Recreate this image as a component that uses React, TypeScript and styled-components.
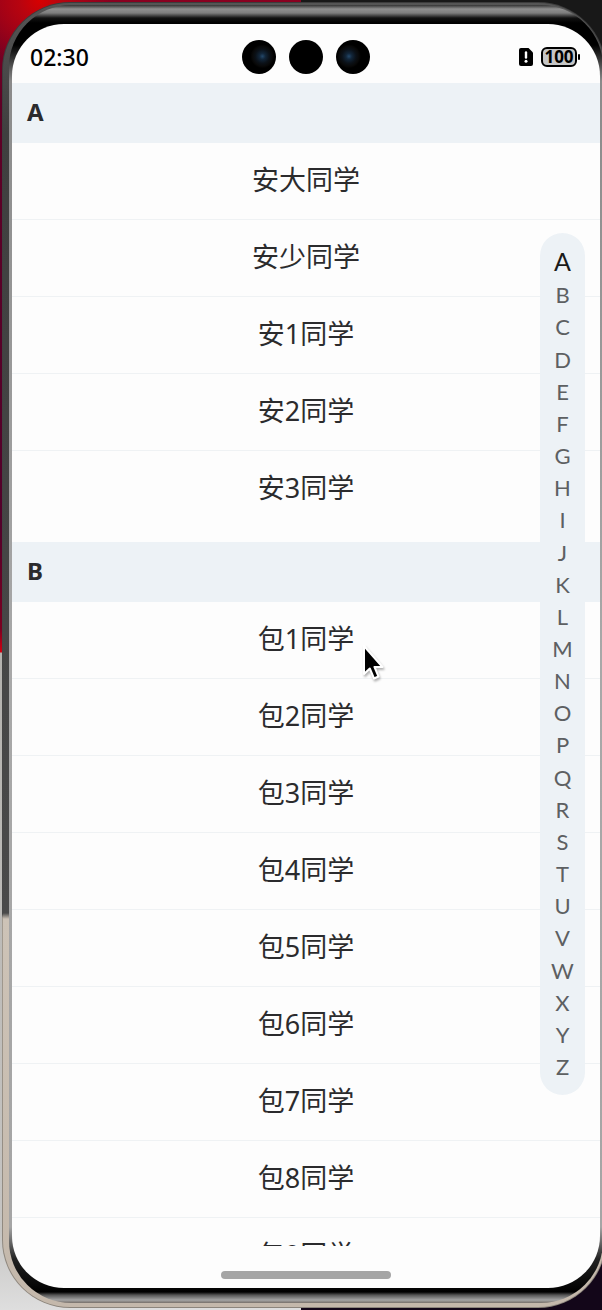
import React from "react";
import styled, { createGlobalStyle } from "styled-components";

const GlobalStyle = createGlobalStyle`
  *, *::before, *::after { box-sizing: border-box; }
  html, body { margin: 0; padding: 0; }
  body { font-family: "Noto Sans", "Noto Sans CJK SC", sans-serif; color: #2b2b2d; }
`;

const Wallpaper = styled.div`
  height: 100vh;
  padding: 2px 0 2px 2px;
  overflow: hidden;
  background:
    linear-gradient(#181818, #181818) right top / 50% 50% no-repeat,
    linear-gradient(#130619, #130619) right bottom / 50% 50% no-repeat,
    radial-gradient(circle at 40px 0, #d80000 0, #b8040f 20px, transparent 70px) left top / 100% 90px no-repeat,
    linear-gradient(to bottom, #8a0020 0, #5e0025 8%, #52002a 40%, #7a0020 48%, #d00010 652px, #b4b2ae 653px, #c6c5c3 94%, #dedede 100%);
`;

const PhoneFrame = styled.div`
  height: 100%;
  margin-right: -4px;
  padding: 1px;
  border-radius: 68px;
  background: linear-gradient(to bottom, #3c3c3c 0, #484848 912px, #a39b90 916px, #8c857c 100%);
`;

const PhoneBand = styled.div`
  height: 100%;
  padding: 2px 2px 4px 6px;
  border-radius: 67px;
  background: linear-gradient(to bottom, #555 0, #3f3f3f 10%, #4a4a4a 910px, #cdc3b7 916px, #c4b8ab 100%);
`;

const PhoneRim = styled.div`
  height: 100%;
  padding: 19px 3px 15px 3px;
  border-radius: 62px;
  background: linear-gradient(to bottom, #333 0, #909090 4px, #7d7d7d 8px, #111 13px, #000 18px, #000 40px, #8a8a8a 76px, #a8a8a8 50%, #a5a5a5 calc(100% - 76px), #222 calc(100% - 44px), #000 calc(100% - 11px), #555 calc(100% - 8px), #a5a5a5 calc(100% - 3px), #77706a 100%);
`;

const Screen = styled.main`
  display: flex;
  flex-direction: column;
  height: 100%;
  overflow: hidden;
  border-radius: 52px;
  background: #fdfdfd;
`;

const StatusBar = styled.header`
  display: grid;
  grid-template-columns: 1fr auto 1fr;
  align-items: center;
  flex: none;
  height: 59px;
  padding: 7px 18px 0;
`;

const Clock = styled.time`
  font-size: 23px;
  line-height: 32px;
  font-weight: 500;
  color: #000;
`;

const Cameras = styled.div`
  display: flex;
  gap: 13px;
`;

const Lens = styled.span<{ $glow?: string }>`
  width: 34px;
  height: 34px;
  border-radius: 50%;
  background: ${(p) =>
    p.$glow
      ? `radial-gradient(circle at ${p.$glow}, #24486a 0, #12263a 3px, #0b1118 7px, #090909 10px, #000 12px)`
      : "#000"};
`;

const StatusIcons = styled.div`
  display: flex;
  justify-content: flex-end;
  align-items: center;
  gap: 8px;
  padding-right: 2px;
`;

const BatteryBox = styled.span`
  display: flex;
  align-items: center;
  gap: 1px;
`;

const BatteryLevel = styled.span`
  width: 36px;
  height: 20px;
  border: 2px solid #000;
  border-radius: 6px;
  background: #c6c6c6;
  color: #000;
  font-size: 17px;
  line-height: 16px;
  font-weight: 700;
  display: flex;
  align-items: center;
  justify-content: center;
`;

const BatteryTip = styled.span`
  width: 2px;
  height: 6px;
  border-radius: 1px;
  background: #000;
`;

const ListArea = styled.div`
  position: relative;
  flex: 1;
  min-height: 0;
`;

const ContactList = styled.div`
  height: 100%;
  overflow-y: auto;
  scrollbar-width: none;
`;

const Group = styled.section`
  margin-bottom: 14px;
`;

const GroupTitle = styled.h2`
  margin: 0;
  padding: 0 15px 2px;
  font-size: 24px;
  line-height: 58px;
  font-weight: 700;
  background: #edf2f6;
`;

const Contacts = styled.ul`
  margin: 0;
  padding: 0;
  list-style: none;
`;

const Contact = styled.li`
  height: 77px;
  border-bottom: 1px solid #eff2f4;
  font-size: 27px;
  line-height: 74px;
  text-align: center;
  &:last-child { border-bottom-color: transparent; }
`;

const AlphabetIndex = styled.nav`
  position: absolute;
  top: 150px;
  right: 15px;
  bottom: 151px;
  width: 45px;
  padding: 10px 0 12px;
  display: flex;
  flex-direction: column;
  border-radius: 23px;
  background: #edf2f6;
`;

const Letter = styled.a<{ $active: boolean }>`
  flex: ${(p) => (p.$active ? 36 : 32)} 1 0;
  min-height: 0;
  display: flex;
  align-items: center;
  justify-content: center;
  font-family: Lato, sans-serif;
  font-size: ${(p) => (p.$active ? 25 : 22)}px;
  line-height: 28px;
  color: ${(p) => (p.$active ? "#1b1b1b" : "#5d6062")};
  text-decoration: none;
`;

const HomeArea = styled.footer`
  flex: none;
  display: flex;
  justify-content: center;
  padding: 25px 0 9px;
`;

const HomeBar = styled.span`
  width: 170px;
  height: 8px;
  border-radius: 4px;
  background: #a5a5a5;
`;

const Cursor = styled.svg`
  position: absolute;
  left: 348px;
  top: 560px;
  filter: drop-shadow(1px 2px 1px rgba(0, 0, 0, 0.3));
`;

const groups = [
  { key: "A", names: ["安大同学", "安少同学", "安1同学", "安2同学", "安3同学"] },
  { key: "B", names: [1, 2, 3, 4, 5, 6, 7, 8, 9].map((n) => `包${n}同学`) },
];

const letters = "ABCDEFGHIJKLMNOPQRSTUVWXYZ".split("");

export default function App() {
  return (
    <>
      <GlobalStyle />
      <Wallpaper>
        <PhoneFrame>
          <PhoneBand>
            <PhoneRim>
              <Screen>
                <StatusBar>
                  <Clock>02:30</Clock>
                  <Cameras>
                    <Lens $glow="60% 48%" />
                    <Lens />
                    <Lens $glow="38% 48%" />
                  </Cameras>
                  <StatusIcons>
                    <svg width="14" height="18" viewBox="0 0 14 18" aria-hidden="true">
                      <path d="M2 0H9.500L14 4.500V16a2 2 0 0 1-2 2H2a2 2 0 0 1-2-2V2a2 2 0 0 1 2-2Z" fill="#000" />
                      <path d="M7 4.500V9.500" stroke="#fff" strokeWidth="2.400" strokeLinecap="round" />
                      <circle cx="7" cy="13.200" r="1.500" fill="#fff" />
                    </svg>
                    <BatteryBox>
                      <BatteryLevel>100</BatteryLevel>
                      <BatteryTip />
                    </BatteryBox>
                  </StatusIcons>
                </StatusBar>
                <ListArea>
                  <ContactList>
                    {groups.map((group) => (
                      <Group key={group.key} id={group.key}>
                        <GroupTitle>{group.key}</GroupTitle>
                        <Contacts>
                          {group.names.map((name) => (
                            <Contact key={name}>{name}</Contact>
                          ))}
                        </Contacts>
                      </Group>
                    ))}
                  </ContactList>
                  <AlphabetIndex aria-label="Index">
                    {letters.map((letter) => (
                      <Letter key={letter} href={`#${letter}`} $active={letter === "A"}>
                        {letter}
                      </Letter>
                    ))}
                  </AlphabetIndex>
                  <Cursor width="28" height="40" viewBox="0 0 28 40" aria-hidden="true">
                    <path
                      d="M4 3V31L9.800 25.500L14 35.500L18.500 33.500L14.500 24H22.500Z"
                      fill="#000"
                      stroke="#fff"
                      strokeWidth="2"
                      strokeLinejoin="round"
                    />
                  </Cursor>
                </ListArea>
                <HomeArea>
                  <HomeBar />
                </HomeArea>
              </Screen>
            </PhoneRim>
          </PhoneBand>
        </PhoneFrame>
      </Wallpaper>
    </>
  );
}
